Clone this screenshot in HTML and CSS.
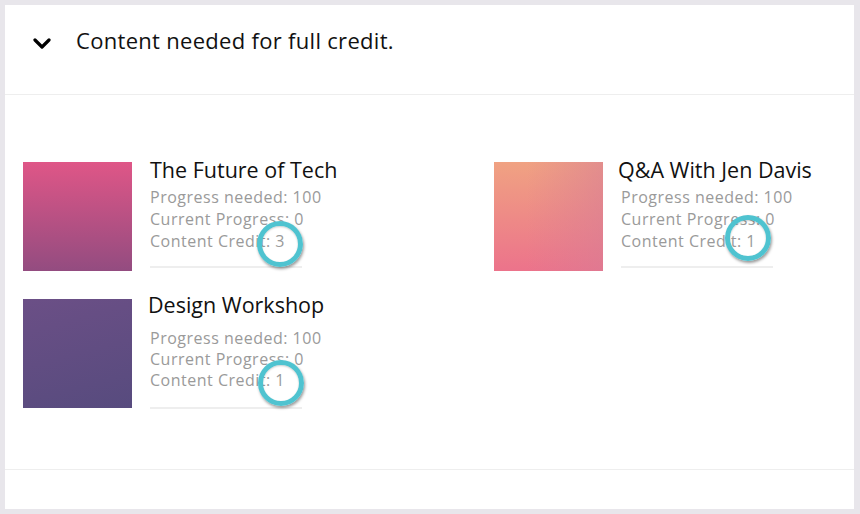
FILE: index.html
```html
<!DOCTYPE html>
<html>
<head>
<meta charset="utf-8">
<link rel="stylesheet" href="styles.css">
</head>
<body>
<div class="panel">
  <div class="header">
    <svg class="chevron" width="18" height="12" viewBox="0 0 18 12"><path d="M2 2 L9 9 L16 2" fill="none" stroke="#000" stroke-width="3.2" stroke-linecap="round" stroke-linejoin="round"/></svg>
    <span class="header-title">Content needed for full credit.</span>
  </div>
  <div class="cards">
    <div class="card">
      <div class="thumb thumb-tech"></div>
      <div class="info">
        <div class="title">The Future of Tech</div>
        <div class="meta">Progress needed: 100</div>
        <div class="meta">Current Progress: 0</div>
        <div class="meta credit">Content Credit: 3<span class="ring"></span></div>
        <div class="bar"></div>
      </div>
    </div>
    <div class="card">
      <div class="thumb thumb-qa"></div>
      <div class="info">
        <div class="title title-q">Q&amp;A With Jen Davis</div>
        <div class="meta">Progress needed: 100</div>
        <div class="meta">Current Progress: 0</div>
        <div class="meta credit">Content Credit: 1<span class="ring ring-up"></span></div>
        <div class="bar"></div>
      </div>
    </div>
    <div class="card">
      <div class="thumb thumb-design"></div>
      <div class="info info-tight">
        <div class="title title-d">Design Workshop</div>
        <div class="meta">Progress needed: 100</div>
        <div class="meta">Current Progress: 0</div>
        <div class="meta credit">Content Credit: 1<span class="ring ring-low"></span></div>
        <div class="bar"></div>
      </div>
    </div>
  </div>
  <div class="footer"></div>
</div>
</body>
</html>
```
FILE: styles.css
```css
html, body {
  margin: 0;
  padding: 0;
}
body {
  background: #e8e6eb;
  font-family: "Open Sans", "Noto Sans", sans-serif;
  width: 860px;
  height: 514px;
  overflow: hidden;
}
.panel {
  margin: 5px 0 0 5px;
  width: 849px;
  height: 504px;
  background: #ffffff;
  display: flex;
  flex-direction: column;
}
.header {
  height: 90px;
  box-sizing: border-box;
  border-bottom: 1px solid #eeeeee;
  display: flex;
  align-items: flex-start;
  padding: 21px 0 0 28px;
  gap: 25px;
}
.chevron {
  margin-top: 12px;
  flex: none;
}
.header-title {
  font-size: 22px;
  line-height: 28px;
  letter-spacing: 0.3px;
  color: #111;
}
.cards {
  display: grid;
  grid-template-columns: 471px 1fr;
  grid-auto-rows: 109px;
  row-gap: 28px;
  padding: 67px 18px 0 18px;
  height: 375px;
  box-sizing: border-box;
  border-bottom: 1px solid #eeeeee;
}
.card {
  display: flex;
  gap: 18px;
  align-items: flex-start;
}
.thumb {
  width: 109px;
  height: 109px;
  flex: none;
}
.thumb-tech {
  background: linear-gradient(to bottom, #df5687, #934c80);
}
.thumb-qa {
  background: linear-gradient(to right, rgba(220,120,150,0) 30%, rgba(215,125,150,0.55)), linear-gradient(to bottom, #f0a282, #ec738b);
}
.thumb-design {
  background: linear-gradient(165deg, #6b4f86, #574b7e);
}
.info {
  display: flex;
  flex-direction: column;
  margin-top: -5px;
}
.info-tight {
  margin-top: -7px;
}
.title {
  font-size: 21.5px;
  line-height: 25px;
  color: #111;
  margin-bottom: 4px;
}
.title-q {
  margin-left: -3px;
}
.title-d {
  margin-left: -2px;
  margin-bottom: 11px;
}
.meta {
  font-size: 16px;
  line-height: 22px;
  letter-spacing: 0.5px;
  color: #9a9a9a;
}
.info-tight .meta {
  line-height: 21px;
}
.credit {
  position: relative;
}
.bar {
  margin-top: 14px;
  width: 152px;
  height: 2px;
  background: #eeeeee;
}
.info-tight .bar {
  margin-top: 16px;
}
.ring {
  position: absolute;
  left: 107px;
  top: -9px;
  width: 36px;
  height: 36px;
  border: 5px solid #4fc3d0;
  border-radius: 50%;
  box-shadow: 1px 2px 3px rgba(0,0,0,0.4), inset 0 1px 2px rgba(0,0,0,0.2);
}
.ring-up {
  top: -15px;
  left: 104px;
}
.ring-low {
  top: -10px;
  left: 108px;
}
.footer {
  flex: 1;
}
```
